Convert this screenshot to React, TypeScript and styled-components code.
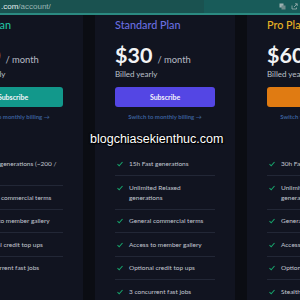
import * as React from 'react';
import styled, { createGlobalStyle } from 'styled-components';

const GlobalStyle = createGlobalStyle`
  body {
    margin: 0;
    background-color: #0b0d13;
    font-family: Lato, "Noto Sans", sans-serif;
    overflow: hidden;
  }
`;

const Page = styled.div`
  width: 300px;
  height: 300px;
  overflow: hidden;
  background-color: #0b0d13;
  position: relative;
`;

const Bar = styled.div`
  height: 13px;
  display: flex;
  align-items: center;
  justify-content: space-between;
  background-color: #185b59;
  border-bottom: 2px solid #2b8a81;
  padding: 0 2px 0 0;
`;

const Url = styled.div`
  font-family: "Liberation Sans", sans-serif;
  font-size: 8px;
  color: #e6efef;
  display: flex;
  align-items: center;
  height: 13px;
  width: 203px;
  padding-left: 1px;
  background-color: #1a5250;
`;

const UrlPath = styled.span`
  color: #9bb6b5;
`;

const Tools = styled.div`
  display: flex;
  gap: 5px;
  align-items: center;
`;

const Row = styled.div`
  display: flex;
  gap: 12px;
  margin-left: -57px;
`;

const Card = styled.section`
  flex: none;
  width: 100px;
  min-height: 285px;
  padding: 2px 20px 0;
  background-color: #111420;
`;

const PlanName = styled.h2<{ $color: string }>`
  margin: 0;
  font-size: 10.8px;
  line-height: 15px;
  font-weight: 500;
  color: ${p => p.$color};
  white-space: nowrap;
`;

const PriceRow = styled.div`
  display: flex;
  align-items: baseline;
  gap: 5px;
  margin-top: 10.5px;
  white-space: nowrap;
`;

const Price = styled.span`
  font-size: 21.5px;
  line-height: 24px;
  font-weight: 700;
  color: #f2f3f5;
`;

const Per = styled.span`
  font-size: 9.4px;
  color: #b5b9c4;
`;

const Billed = styled.div`
  font-size: 8px;
  line-height: 11px;
  margin-top: 2px;
  color: #bcc0ca;
  white-space: nowrap;
`;

const Button = styled.button<{ $bg: string }>`
  display: block;
  width: 100%;
  height: 20px;
  margin-top: 7px;
  border: none;
  border-radius: 3px;
  background-color: ${p => p.$bg};
  color: #f4f4fa;
  font-family: Lato, sans-serif;
  font-size: 7px;
  font-weight: 700;
  cursor: pointer;
`;

const Switch = styled.div`
  margin-top: 5px;
  text-align: center;
  font-size: 6px;
  line-height: 10px;
  font-weight: 700;
  color: #3a5f98;
  white-space: nowrap;
`;

const Features = styled.ul`
  list-style: none;
  margin: 31px 0 0;
  padding: 0;
`;

const Feature = styled.li`
  display: flex;
  align-items: flex-start;
  gap: 6px;
  padding: 6.5px 0 6px;
  border-top: 1px solid #222736;
  font-size: 6.5px;
  line-height: 10px;
  color: #c3c7d1;
  &:first-child {
    border-top: none;
  }
`;

const Check = styled.svg`
  flex: none;
  margin: 2px 0 0 2px;
`;

const Watermark = styled.div`
  position: absolute;
  left: 90px;
  top: 132px;
  font-family: "Liberation Sans", Arial, sans-serif;
  font-size: 12.5px;
  color: #ffffff;
  text-shadow: 0 0 2px #000, 0 0 2px #000, 1px 1px 1px #000;
`;

interface Plan {
  name: string;
  color: string;
  price: string;
  button: string;
  features: string[];
}

const plans: Plan[] = [
  {
    name: 'Basic Plan',
    color: '#22c1a0',
    price: '$10',
    button: '#12988b',
    features: [
      'Limited generations (~200 / month)',
      'General commercial terms',
      'Access to member gallery',
      'Optional credit top ups',
      '3 concurrent fast jobs',
    ],
  },
  {
    name: 'Standard Plan',
    color: '#6a6fe0',
    price: '$30',
    button: '#5446e4',
    features: [
      '15h Fast generations',
      'Unlimited Relaxed generations',
      'General commercial terms',
      'Access to member gallery',
      'Optional credit top ups',
      '3 concurrent fast jobs',
    ],
  },
  {
    name: 'Pro Plan',
    color: '#e8b324',
    price: '$60',
    button: '#e07b12',
    features: [
      '30h Fast generations',
      'Unlimited Relaxed generations',
      'General commercial terms',
      'Access to member gallery',
      'Optional credit top ups',
      'Stealth image generation',
      '12 concurrent fast jobs',
    ],
  },
];

function CheckIcon() {
  return (
    <Check width="6" height="6" viewBox="0 0 6 6">
      <path d="M0.5 3.2 L2.2 4.8 L5.5 1" fill="none" stroke="#17a36b" strokeWidth="1.1" />
    </Check>
  );
}

export default function App() {
  return (
    <Page>
      <GlobalStyle />
      <Bar>
        <Url>
          .com<UrlPath>/account/</UrlPath>
        </Url>
        <Tools>
          <svg width="7" height="7" viewBox="0 0 7 7">
            <rect x="0.5" y="0.5" width="4" height="4" fill="#9fb3b3" />
            <rect x="2.5" y="2.5" width="4" height="4" fill="#6f8c8c" />
          </svg>
          <svg width="7" height="7" viewBox="0 0 7 7">
            <path d="M1 2.5 V6 H5.5 V4.5 M3 4 L6.2 0.8 M4 0.8 H6.2 V3" fill="none" stroke="#9fb3b3" strokeWidth="0.8" />
          </svg>
        </Tools>
      </Bar>
      <Row>
        {plans.map(plan => (
          <Card key={plan.name}>
            <PlanName $color={plan.color}>{plan.name}</PlanName>
            <PriceRow>
              <Price>{plan.price}</Price>
              <Per>/ month</Per>
            </PriceRow>
            <Billed>Billed yearly</Billed>
            <Button $bg={plan.button}>Subscribe</Button>
            <Switch>Switch to monthly billing →</Switch>
            <Features>
              {plan.features.map(f => (
                <Feature key={f}>
                  <CheckIcon />
                  <span>{f}</span>
                </Feature>
              ))}
            </Features>
          </Card>
        ))}
      </Row>
      <Watermark>blogchiasekienthuc.com</Watermark>
    </Page>
  );
}
